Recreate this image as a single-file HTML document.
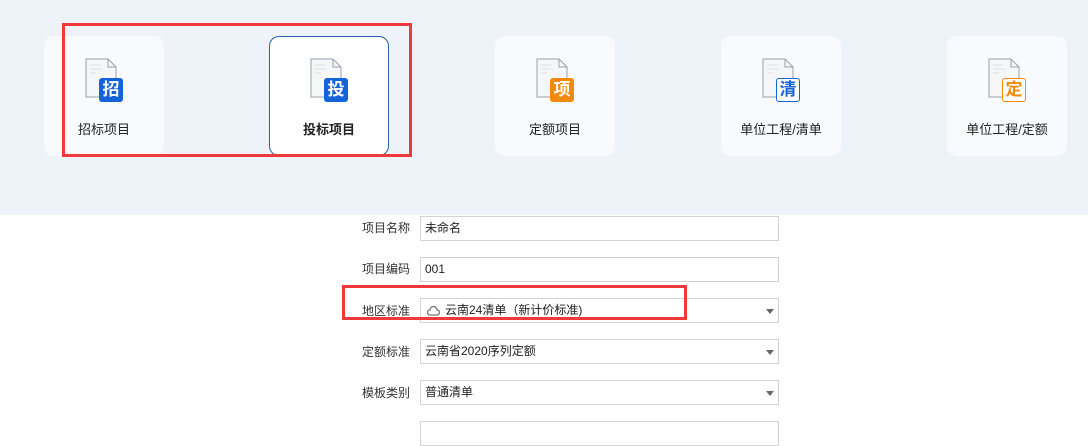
<!DOCTYPE html>
<html><head><meta charset="utf-8"><style>
*{margin:0;padding:0;box-sizing:border-box}
body{width:1088px;height:424px;overflow:hidden;background:#fff;font-family:"Liberation Sans","Noto Sans CJK SC",sans-serif;position:relative}
.hdr{position:absolute;left:0;top:0;width:1088px;height:215px;background:#eef2f9}
.card{position:absolute;top:36px;width:120px;height:120px;background:#f8fafd;border-radius:10px}
.card.sel{background:#fff;border:1px solid #2f5fb0}
.sel .doc,.sel .badge,.sel .lbl{margin-left:-1px;margin-top:-1px}
.doc{position:absolute;left:41px;top:22px}
.badge{position:absolute;left:55px;top:42px;width:24px;height:24px;border-radius:3px;color:#fff;font-size:17px;line-height:24px;text-align:center;font-weight:bold}
.lbl{position:absolute;left:0;width:120px;top:83px;font-size:13px;color:#222;text-align:center}
.red{position:absolute;border:3px solid #f0393b}
.fl{position:absolute;left:330px;width:80px;text-align:right;font-size:12px;color:#333}
.in{position:absolute;left:420px;width:359px;height:25px;border:1px solid #d4d4d4;font-size:12px;color:#222;padding-left:4px;line-height:23px;background:#fff}
.arr{position:absolute;right:4px;top:10px;width:0;height:0;border-left:4px solid transparent;border-right:4px solid transparent;border-top:5px solid #666}
</style></head><body>
<div class="hdr"></div>
<div class="card" style="left:44px"><svg class="doc" width="32" height="40" viewBox="0 0 32 40"><path d="M1 1h22l8 8v30H1z" fill="#f5f6f8" stroke="#9aa0aa" stroke-width="1"/><path d="M23 1v8h8" fill="none" stroke="#9aa0aa"/><path d="M5 7h10M5 11h12M5 15h6" stroke="#e2e4e8" stroke-width="1.3"/></svg><div class="badge" style="background:#1463d8">招</div><div class="lbl">招标项目</div></div>
<div class="card sel" style="left:269px"><svg class="doc" width="32" height="40" viewBox="0 0 32 40"><path d="M1 1h22l8 8v30H1z" fill="#f5f6f8" stroke="#9aa0aa"/><path d="M23 1v8h8" fill="none" stroke="#9aa0aa"/><path d="M5 7h10M5 11h12M5 15h6" stroke="#e2e4e8" stroke-width="1.3"/></svg><div class="badge" style="background:#1463d8">投</div><div class="lbl" style="font-weight:bold">投标项目</div></div>
<div class="card" style="left:495px"><svg class="doc" width="32" height="40" viewBox="0 0 32 40"><path d="M1 1h22l8 8v30H1z" fill="#f5f6f8" stroke="#9aa0aa"/><path d="M23 1v8h8" fill="none" stroke="#9aa0aa"/><path d="M5 7h10M5 11h12M5 15h6" stroke="#e2e4e8" stroke-width="1.3"/></svg><div class="badge" style="background:#f08a0c">项</div><div class="lbl">定额项目</div></div>
<div class="card" style="left:721px"><svg class="doc" width="32" height="40" viewBox="0 0 32 40"><path d="M1 1h22l8 8v30H1z" fill="#f5f6f8" stroke="#9aa0aa"/><path d="M23 1v8h8" fill="none" stroke="#9aa0aa"/><path d="M5 7h10M5 11h12M5 15h6" stroke="#e2e4e8" stroke-width="1.3"/></svg><div class="badge" style="background:#fff;color:#1463d8;border:1.5px solid #1463d8;line-height:21px">清</div><div class="lbl">单位工程/清单</div></div>
<div class="card" style="left:947px"><svg class="doc" width="32" height="40" viewBox="0 0 32 40"><path d="M1 1h22l8 8v30H1z" fill="#f5f6f8" stroke="#9aa0aa"/><path d="M23 1v8h8" fill="none" stroke="#9aa0aa"/><path d="M5 7h10M5 11h12M5 15h6" stroke="#e2e4e8" stroke-width="1.3"/></svg><div class="badge" style="background:#fff;color:#f08a0c;border:1.5px solid #f08a0c;line-height:21px">定</div><div class="lbl">单位工程/定额</div></div>
<div class="red" style="left:62px;top:23px;width:350px;height:134px"></div>

<div class="fl" style="top:219px">项目名称</div><div class="in" style="top:216px">未命名</div>
<div class="fl" style="top:260px">项目编码</div><div class="in" style="top:257px">001</div>
<div class="fl" style="top:302px">地区标准</div><div class="in" style="top:298px;padding-left:24px"><svg style="position:absolute;left:6px;top:7px" width="13" height="10" viewBox="0 0 13 10"><path d="M3 9a2.5 2.5 0 0 1 0-5 3.5 3.5 0 0 1 7 0 2.5 2.5 0 0 1 0 5z" fill="none" stroke="#777" stroke-width="1.3"/></svg>云南24清单（新计价标准)<div class="arr"></div></div>
<div class="fl" style="top:343px">定额标准</div><div class="in" style="top:339px">云南省2020序列定额<div class="arr"></div></div>
<div class="fl" style="top:384px">模板类别</div><div class="in" style="top:380px">普通清单<div class="arr"></div></div>
<div class="in" style="top:421px"></div>
<div class="red" style="left:342px;top:285px;width:345px;height:35px"></div>
</body></html>
